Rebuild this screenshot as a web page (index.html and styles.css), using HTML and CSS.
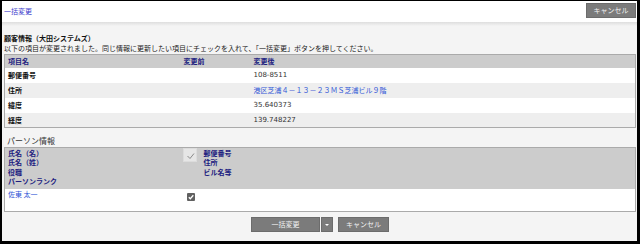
FILE: index.html
```html
<!DOCTYPE html>
<html lang="ja">
<head>
<meta charset="utf-8">
<title>一括変更</title>
<link rel="stylesheet" href="styles.css">
</head>
<body>
<div class="frame">
  <header class="topbar">
    <a class="toplink" href="#">一括変更</a>
    <button class="btn btn-top">キャンセル</button>
  </header>
  <main class="content">
    <h2 class="title">顧客情報（大田システムズ）</h2>
    <p class="desc">以下の項目が変更されました。同じ情報に更新したい項目にチェックを入れて、「一括変更」ボタンを押してください。</p>
    <table class="grid changes">
      <colgroup><col class="c1"><col class="c2"><col></colgroup>
      <thead>
        <tr><th>項目名</th><th>変更前</th><th>変更後</th></tr>
      </thead>
      <tbody>
        <tr><td class="label">郵便番号</td><td></td><td class="num">108-8511</td></tr>
        <tr class="alt"><td class="label">住所</td><td></td><td><a class="addr" href="#">港区芝浦４－１３－２３ＭＳ芝浦ビル９階</a></td></tr>
        <tr><td class="label">緯度</td><td></td><td class="num">35.640373</td></tr>
        <tr class="alt"><td class="label">経度</td><td></td><td class="num">139.748227</td></tr>
      </tbody>
    </table>
    <h3 class="section">パーソン情報</h3>
    <table class="grid persons">
      <colgroup><col class="p1"><col class="p2"><col></colgroup>
      <thead>
        <tr>
          <th class="stack">氏名（名）<br>氏名（姓）<br>役職<br>パーソンランク</th>
          <th class="checkcell"><span class="checkall"><svg width="13" height="14" viewBox="0 0 13 14"><polyline points="3.5,7 6,9.5 10,4.5" fill="none" stroke="#8a8a8a" stroke-width="1"/></svg></span></th>
          <th class="stack">郵便番号<br>住所<br>ビル名等</th>
        </tr>
      </thead>
      <tbody>
        <tr class="prow">
          <td><a class="addr" href="#">佐東 太一</a></td>
          <td class="checkcell"><span class="cb"><svg width="8" height="8" viewBox="0 0 8 8"><polyline points="1.8,4.2 3.3,5.7 6.3,2.3" fill="none" stroke="#fff" stroke-width="1.3"/></svg></span></td>
          <td></td>
        </tr>
      </tbody>
    </table>
    <div class="actions">
      <div class="split">
        <button class="btn btn-main">一括変更</button>
        <button class="btn btn-drop"><span class="caret"></span></button>
      </div>
      <button class="btn btn-cancel">キャンセル</button>
    </div>
  </main>
</div>
</body>
</html>
```
FILE: styles.css
```css
* { box-sizing: border-box; }
html, body { margin: 0; padding: 0; background: #fff; }
body { font-family: "Noto Sans CJK JP", "Noto Sans", sans-serif; font-size: 7px; color: #222; }

.frame {
  width: 640px;
  height: 244px;
  border-style: solid;
  border-color: #000;
  border-width: 1px 3px 3px 2px;
  background: #f4f4f4;
  display: flex;
  flex-direction: column;
  overflow: hidden;
}

.topbar {
  height: 21px;
  background: #fff;
  display: flex;
  justify-content: space-between;
  align-items: flex-start;
  padding: 2px 1px 0 2px;
  flex: none;
}
.toplink {
  color: #3a3acc;
  text-decoration: none;
  font-size: 7px;
  line-height: 10px;
  margin-top: 3px;
}

.btn {
  font-family: inherit;
  font-size: 7px;
  color: #f2f2f2;
  background: #7b7b7b;
  border: 1px solid #6c6c6c;
  border-radius: 0;
  padding: 0;
  margin: 0;
  height: 15px;
  line-height: 13px;
  cursor: pointer;
}
.btn-top { width: 50px; }

.content {
  flex: 1;
  padding: 0 1px 0 2px;
  background: linear-gradient(#dedede, #f4f4f4 4px);
}

.title {
  margin: 11px 0 0;
  font-size: 7px;
  line-height: 10px;
  font-weight: bold;
  color: #111;
}
.desc {
  margin: 1px 0 0;
  font-size: 7px;
  line-height: 9px;
  color: #222;
}

.grid {
  width: 100%;
  border-collapse: collapse;
  border: 1px solid #aaa;
  background: #fff;
  table-layout: fixed;
}
.grid th {
  background: #cccccc;
  color: #1c1c80;
  font-weight: bold;
  text-align: left;
  font-size: 7px;
  padding: 0 3px;
}
.grid td {
  padding: 0 3px;
  font-size: 7px;
}

.changes { margin-top: 1px; }
.changes .c1 { width: 176px; }
.changes .c2 { width: 70px; }
.changes thead th { height: 13px; line-height: 10px; }
.changes tbody td { height: 15px; line-height: 10px; }
.changes tr.alt td { background: #eeeeee; }
.label { font-weight: bold; color: #111; }
.num { font-family: "DejaVu Sans", sans-serif; color: #333; }
.addr { color: #2f56d6; text-decoration: none; }

.section {
  margin: 0;
  padding: 7px 0 0 3px;
  font-size: 8px;
  line-height: 12px;
  font-weight: normal;
  color: #333;
}

.persons .p1 { width: 176px; }
.persons .p2 { width: 20px; }
.persons thead th {
  height: 41px;
  vertical-align: top;
  line-height: 9.3px;
  padding-top: 1px;
}
.persons thead th.checkcell { padding: 0 2px; }
.checkall {
  display: block;
  width: 14px;
  height: 14px;
  background: #e6e6e6;
  border: 1px solid #dcdcdc;
}
.checkall svg { display: block; }
.prow td { height: 23px; vertical-align: top; line-height: 9px; padding-top: 1px; }
.prow td.checkcell { padding: 4px 0 0 6px; }
.cb {
  display: block;
  width: 8px;
  height: 8px;
  background: #606060;
  border-radius: 1px;
}
.cb svg { display: block; }

.actions {
  display: flex;
  justify-content: center;
  gap: 5px;
  margin-top: 5px;
}
.split { display: flex; gap: 1px; }
.btn-main { width: 69px; }
.btn-drop { width: 12px; display: flex; align-items: center; justify-content: center; }
.caret {
  width: 0; height: 0;
  border-left: 2px solid transparent;
  border-right: 2px solid transparent;
  border-top: 2px solid #fff;
}
.btn-cancel { width: 51px; }
```
